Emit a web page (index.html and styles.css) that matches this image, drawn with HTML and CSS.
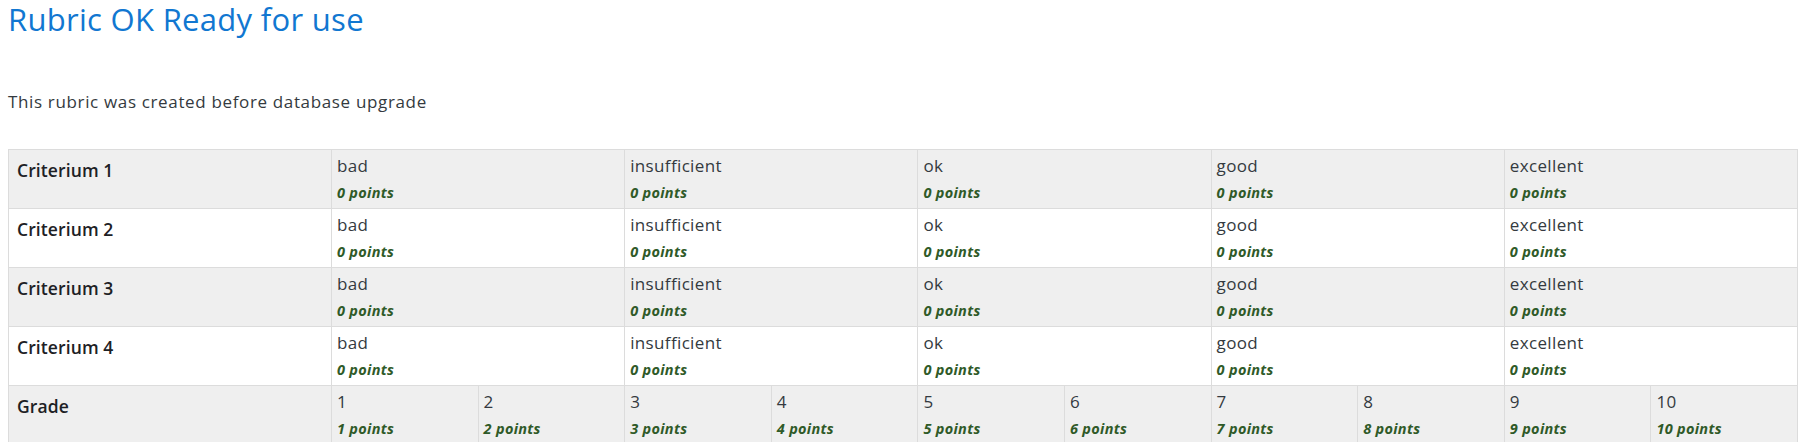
FILE: index.html
```html
<!DOCTYPE html>
<html lang="en">
<head>
<meta charset="utf-8">
<title>Rubric OK Ready for use</title>
<link rel="stylesheet" href="styles.css">
</head>
<body>
<div class="page">
  <h2 class="title">Rubric OK Ready for use</h2>
  <p class="intro">This rubric was created before database upgrade</p>
  <table class="rubric">
    <colgroup>
      <col class="c-crit">
      <col class="c-half"><col class="c-half">
      <col class="c-half"><col class="c-half">
      <col class="c-half"><col class="c-half">
      <col class="c-half"><col class="c-half">
      <col class="c-half"><col class="c-half">
    </colgroup>
    <tbody>
      <tr class="odd">
        <th class="crit">Criterium 1</th>
        <td class="level" colspan="2"><div class="desc">bad</div><div class="pts">0 points</div></td>
        <td class="level" colspan="2"><div class="desc">insufficient</div><div class="pts">0 points</div></td>
        <td class="level" colspan="2"><div class="desc">ok</div><div class="pts">0 points</div></td>
        <td class="level" colspan="2"><div class="desc">good</div><div class="pts">0 points</div></td>
        <td class="level" colspan="2"><div class="desc">excellent</div><div class="pts">0 points</div></td>
      </tr>
      <tr class="even">
        <th class="crit">Criterium 2</th>
        <td class="level" colspan="2"><div class="desc">bad</div><div class="pts">0 points</div></td>
        <td class="level" colspan="2"><div class="desc">insufficient</div><div class="pts">0 points</div></td>
        <td class="level" colspan="2"><div class="desc">ok</div><div class="pts">0 points</div></td>
        <td class="level" colspan="2"><div class="desc">good</div><div class="pts">0 points</div></td>
        <td class="level" colspan="2"><div class="desc">excellent</div><div class="pts">0 points</div></td>
      </tr>
      <tr class="odd">
        <th class="crit">Criterium 3</th>
        <td class="level" colspan="2"><div class="desc">bad</div><div class="pts">0 points</div></td>
        <td class="level" colspan="2"><div class="desc">insufficient</div><div class="pts">0 points</div></td>
        <td class="level" colspan="2"><div class="desc">ok</div><div class="pts">0 points</div></td>
        <td class="level" colspan="2"><div class="desc">good</div><div class="pts">0 points</div></td>
        <td class="level" colspan="2"><div class="desc">excellent</div><div class="pts">0 points</div></td>
      </tr>
      <tr class="even">
        <th class="crit">Criterium 4</th>
        <td class="level" colspan="2"><div class="desc">bad</div><div class="pts">0 points</div></td>
        <td class="level" colspan="2"><div class="desc">insufficient</div><div class="pts">0 points</div></td>
        <td class="level" colspan="2"><div class="desc">ok</div><div class="pts">0 points</div></td>
        <td class="level" colspan="2"><div class="desc">good</div><div class="pts">0 points</div></td>
        <td class="level" colspan="2"><div class="desc">excellent</div><div class="pts">0 points</div></td>
      </tr>
      <tr class="odd">
        <th class="crit">Grade</th>
        <td class="level"><div class="desc">1</div><div class="pts">1 points</div></td>
        <td class="level"><div class="desc">2</div><div class="pts">2 points</div></td>
        <td class="level"><div class="desc">3</div><div class="pts">3 points</div></td>
        <td class="level"><div class="desc">4</div><div class="pts">4 points</div></td>
        <td class="level"><div class="desc">5</div><div class="pts">5 points</div></td>
        <td class="level"><div class="desc">6</div><div class="pts">6 points</div></td>
        <td class="level"><div class="desc">7</div><div class="pts">7 points</div></td>
        <td class="level"><div class="desc">8</div><div class="pts">8 points</div></td>
        <td class="level"><div class="desc">9</div><div class="pts">9 points</div></td>
        <td class="level"><div class="desc">10</div><div class="pts">10 points</div></td>
      </tr>
    </tbody>
  </table>
</div>
</body>
</html>
```
FILE: styles.css
```css
html, body {
  margin: 0;
  padding: 0;
  background: #ffffff;
}

body {
  font-family: "Open Sans", "Liberation Sans", sans-serif;
  color: #343a40;
}

.page {
  padding: 0 8px;
}

.title {
  margin: 0;
  font-size: 31px;
  line-height: 38px;
  font-weight: 400;
  letter-spacing: 0.3px;
  color: #1177d1;
}

.intro {
  margin: 52px 0 0;
  font-size: 17px;
  line-height: 24px;
  font-weight: 400;
  letter-spacing: 0.65px;
  color: #343a40;
}

.rubric {
  margin-top: 35px;
  width: 1789px;
  border-collapse: collapse;
  table-layout: fixed;
  border: 1px solid #dcdcdc;
}

.c-crit {
  width: 323px;
}

.c-half {
  width: 146.6px;
}

.rubric tr.odd {
  background: #efefef;
}

.rubric tr.even {
  background: #ffffff;
}

.rubric th,
.rubric td {
  border: 1px solid #dcdcdc;
  vertical-align: top;
  text-align: left;
}

.crit {
  padding: 7px 8px;
  font-size: 17.5px;
  line-height: 27px;
  font-weight: 600;
  letter-spacing: 0.1px;
  color: #1d2125;
}

.level {
  padding: 4px 5px 3px;
}

.desc {
  font-size: 17px;
  line-height: 24px;
  font-weight: 400;
  letter-spacing: 0.35px;
  color: #343a40;
}

.pts {
  margin-top: 3px;
  font-size: 14.5px;
  line-height: 24px;
  font-style: italic;
  font-weight: 700;
  letter-spacing: 0.3px;
  color: #2f5a28;
}
```
